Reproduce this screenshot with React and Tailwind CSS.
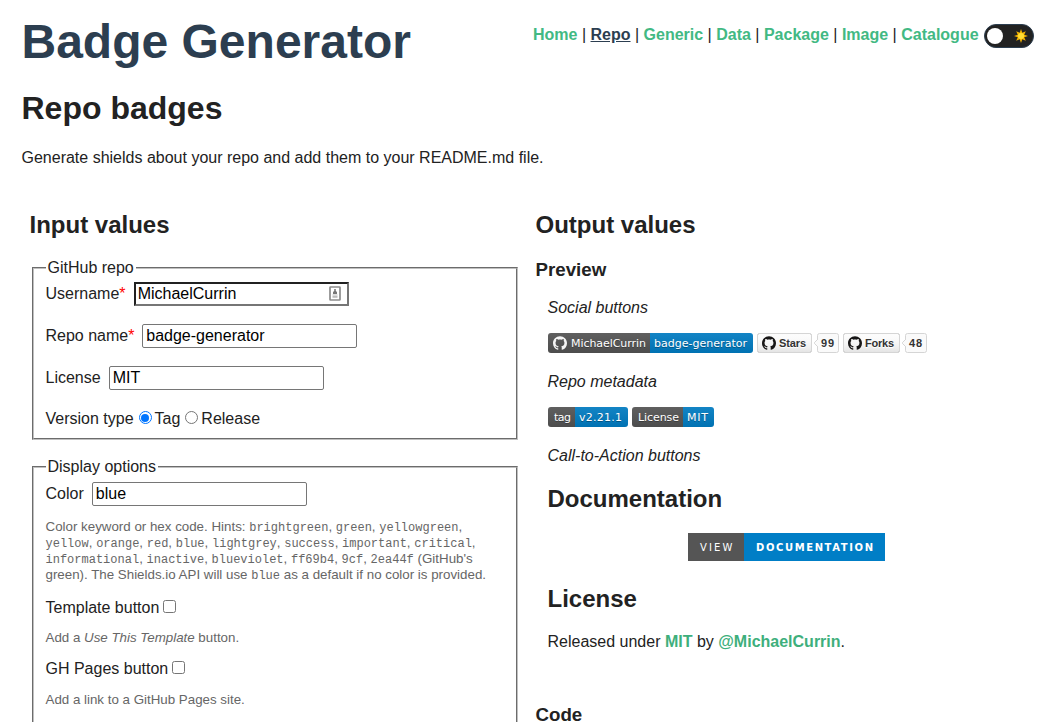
import React from "react";

const OCTOCAT =
  "M12 .297c-6.63 0-12 5.373-12 12 0 5.303 3.438 9.8 8.205 11.385.6.113.82-.258.82-.577 0-.285-.01-1.04-.015-2.04-3.338.724-4.042-1.61-4.042-1.61C4.422 18.07 3.633 17.7 3.633 17.7c-1.087-.744.084-.729.084-.729 1.205.084 1.838 1.236 1.838 1.236 1.07 1.835 2.809 1.305 3.495.998.108-.776.417-1.305.76-1.605-2.665-.3-5.466-1.332-5.466-5.93 0-1.31.465-2.38 1.235-3.22-.135-.303-.54-1.523.105-3.176 0 0 1.005-.322 3.3 1.23.96-.267 1.98-.399 3-.405 1.02.006 2.04.138 3 .405 2.28-1.552 3.285-1.23 3.285-1.23.645 1.653.24 2.873.12 3.176.765.84 1.23 1.91 1.23 3.22 0 4.61-2.805 5.625-5.475 5.92.42.36.81 1.096.81 2.22 0 1.606-.015 2.896-.015 3.286 0 .315.21.69.825.57C20.565 22.092 24 17.592 24 12.297c0-6.627-5.373-12-12-12";

function Octocat({ fill }) {
  return (
    <svg x="5" y="3" width="14" height="14" viewBox="0 0 24 24">
      <path fill={fill} d={OCTOCAT} />
    </svg>
  );
}

function FlatBadge({ id, left, right, leftWidth, width, leftX, leftLength, rightLength, logo }) {
  const rightX = leftWidth + 4;
  return (
    <svg width={width} height="20" className="block shrink-0">
      <linearGradient id={`${id}-shade`} x2="0" y2="100%">
        <stop offset="0" stopColor="#bbb" stopOpacity=".1" />
        <stop offset="1" stopOpacity=".1" />
      </linearGradient>
      <clipPath id={`${id}-clip`}>
        <rect width={width} height="20" rx="3" />
      </clipPath>
      <g clipPath={`url(#${id}-clip)`}>
        <rect width={leftWidth} height="20" fill="#555" />
        <rect x={leftWidth} width={width - leftWidth} height="20" fill="#007ec6" />
        <rect width={width} height="20" fill={`url(#${id}-shade)`} />
      </g>
      {logo && <Octocat fill="whitesmoke" />}
      <g fill="#fff" className="font-['DejaVu_Sans',sans-serif] text-[11px] [text-shadow:0_1px_0_rgba(1,1,1,0.3)]">
        <text x={leftX} y="14" textLength={leftLength}>{left}</text>
        <text x={rightX} y="14" textLength={rightLength}>{right}</text>
      </g>
    </svg>
  );
}

function SocialBadge({ id, label, count, width, labelWidth, labelLength }) {
  const bx = labelWidth + 5.5;
  return (
    <svg width={width} height="20" className="block shrink-0">
      <linearGradient id={`${id}-shade`} x2="0" y2="100%">
        <stop offset="0" stopColor="#fcfcfc" stopOpacity="0" />
        <stop offset="1" stopOpacity=".1" />
      </linearGradient>
      <g stroke="#d5d5d5">
        <rect x=".5" y=".5" width={labelWidth - 1} height="19" rx="2" fill="#fcfcfc" />
        <rect x={bx} y=".5" width={width - bx - 0.5} height="19" rx="2" fill="#fafafa" />
        <path d={`M${bx} 6.5 l-3 3v1 l3 3`} fill="#fafafa" />
        <path d={`M${bx} 7v6`} stroke="#fafafa" />
        <rect x=".5" y=".5" width={labelWidth - 1} height="19" rx="2" fill={`url(#${id}-shade)`} />
      </g>
      <Octocat fill="#181717" />
      <g fill="#333" className="font-['Liberation_Sans',sans-serif] text-[11px] font-bold [text-shadow:0_1px_0_#fff]">
        <text x="22" y="14" textLength={labelLength}>{label}</text>
        <text x={labelWidth + 9} y="14" textLength="13">{count}</text>
      </g>
    </svg>
  );
}

function DocumentationBadge() {
  return (
    <svg width="197" height="28" className="block">
      <rect width="56" height="28" fill="#555" />
      <rect x="56" width="141" height="28" fill="#007ec6" />
      <g fill="#fff" className="font-['DejaVu_Sans',sans-serif] text-[10px]">
        <text x="12" y="17.5" textLength="32.5">VIEW</text>
        <text x="68" y="17.5" textLength="117" className="font-bold">DOCUMENTATION</text>
      </g>
    </svg>
  );
}

const links = ["Home", "Repo", "Generic", "Data", "Package", "Image", "Catalogue"];

function Nav() {
  return (
    <nav className="flex pt-[14px] leading-[18px]">
      <div className="whitespace-pre pt-[2px] text-[#2c3e50]">
        {links.map((name, i) => (
          <React.Fragment key={name}>
            {i > 0 && <span className="text-[#222]"> | </span>}
            <a
              href="#"
              className={name === "Repo" ? "font-bold text-[#2c3e50] underline" : "font-bold text-[#42b983]"}
            >
              {name}
            </a>
          </React.Fragment>
        ))}
      </div>
      <button className="ml-[5.3px] flex h-6 w-[50px] items-center justify-between rounded-full border border-[#2c3e50] bg-[#222] pl-[2px] pr-[5px]">
        <span className="size-4 rounded-full bg-white" />
        <svg width="14" height="14" viewBox="-7 -7 14 14">
          <path
            fill="#f5b400"
            d="M0-7 1.3-3.2 4.8-4.8 3.2-1.3 7 0 3.2 1.3 4.8 4.8 1.3 3.2 0 7-1.3 3.2-4.8 4.8-3.2 1.3-7 0-3.2-1.3-4.8-4.8-1.3-3.2Z"
          />
          <circle r="3" fill="#ffdd33" />
        </svg>
      </button>
    </nav>
  );
}

function Fieldset({ legend, className, children }) {
  return (
    <fieldset className={`ml-[2px] w-[486px] border-2 border-[#c0c0c0] [border-style:groove] px-[12px] ${className}`}>
      <legend className="px-[2px] leading-[18px]">{legend}</legend>
      {children}
    </fieldset>
  );
}

function Field({ label, required, value, focused, gap = "mr-[8.1px]" }) {
  return (
    <div className="mb-[18px] flex h-6 items-center leading-[18px]">
      <label className={gap}>
        {label}
        {required && <span className="text-[#f00]">*</span>}
      </label>
      <div
        className={
          focused
            ? "flex h-6 w-[215px] items-center justify-between border-2 border-[#767676] bg-white pl-[2px] pr-[6px] text-black [border-style:inset]"
            : "flex h-6 w-[215px] items-center rounded-[2px] border border-[#767676] bg-white pl-[3px] text-black"
        }
      >
        <span>{value}</span>
        {focused && (
          <svg width="12" height="15" viewBox="0 0 12 15" className="mb-[1px]">
            <rect x="1" y="1" width="10" height="13" rx=".5" fill="#fff" stroke="#8c8c8c" strokeWidth="1.7" />
            <path d="M5.2 3h1.6v2L8 6v2H4V6l1.2-1Z" fill="#777" />
            <path d="M3.5 8h5v1.2h-5Z" fill="#ddd" />
            <path d="M3.5 9.5h5v2.3h-5Z" fill="#bbb" />
          </svg>
        )}
      </div>
    </div>
  );
}

function Radio({ checked }) {
  return (
    <span
      className={`mb-[3px] flex size-[13px] items-center justify-center rounded-full border bg-white ${checked ? "border-[#0075ff]" : "border-[#767676]"}`}
    >
      {checked && <span className="size-[8px] shrink-0 rounded-full bg-[#0075ff]" />}
    </span>
  );
}

function CheckRow({ label }) {
  return (
    <div className="flex h-[18px] items-center leading-[18px]">
      {label}
      <span className="ml-[4px] mb-[3px] size-[13px] rounded-[2.5px] border border-[#767676] bg-white" />
    </div>
  );
}

function Code({ children }) {
  return <code className="font-['Liberation_Mono',monospace] text-[12px] leading-none">{children}</code>;
}

const lines = [
  ["brightgreen", "green", "yellowgreen"],
  ["yellow", "orange", "red", "blue", "lightgrey", "success", "important", "critical"],
  ["informational", "inactive", "blueviolet", "ff69b4", "9cf"],
];

function Words({ words }) {
  return words.map((w, i) => (
    <React.Fragment key={w}>
      {i > 0 && " "}
      <Code>{w}</Code>,
    </React.Fragment>
  ));
}

export default function App() {
  return (
    <div className="h-[722px] overflow-hidden bg-white px-[21.5px] pt-[10px] font-['Liberation_Sans',Arial,sans-serif] text-[16px] text-[#222]">
      <header className="flex h-[80px] justify-between pr-[1.65px]">
        <h1 className="pt-[4px] text-[48px] font-bold leading-[56px] text-[#2c3e50]">Badge Generator</h1>
        <Nav />
      </header>
      <h2 className="text-[32px] font-bold leading-[36px]">Repo badges</h2>
      <p className="mt-[23px] leading-[18px]">Generate shields about your repo and add them to your README.md file.</p>

      <main className="mt-[44px] flex">
        <section className="w-[506px] shrink-0 pl-[8px]">
          <h2 className="text-[24px] font-bold leading-[28px]">Input values</h2>
          <Fieldset legend="GitHub repo" className="mt-[20px] h-[181px]">
            <div className="pt-[5px]">
              <Field label="Username" required value="MichaelCurrin" focused />
              <Field label="Repo name" required value="badge-generator" gap="mr-[7.8px]" />
              <Field label="License" value="MIT" />
            </div>
            <div className="flex h-[22px] items-center leading-[18px]">
              <span className="mr-[5px]">Version type</span>
              <Radio checked />
              <span className="ml-[3px] mr-[5px]">Tag</span>
              <Radio />
              <span className="ml-[3px]">Release</span>
            </div>
          </Fieldset>
          <Fieldset legend="Display options" className="mt-[18px] h-[320px]">
            <div className="pt-[6px]">
              <Field label="Color" value="blue" />
            </div>
            <p className="-mt-[5px] whitespace-nowrap text-[13.333px] leading-[16px] text-[#666]">
              Color keyword or hex code. Hints: <Words words={lines[0]} />
              <br />
              <Words words={lines[1]} />
              <br />
              <Words words={lines[2]} /> <Code>2ea44f</Code> (GitHub's
              <br />
              green). The Shields.io API will use <Code>blue</Code> as a default if no color is provided.
            </p>
            <div className="mt-[16px]">
              <CheckRow label="Template button" />
              <p className="mt-[13px] text-[13.333px] leading-[16px] text-[#666]">
                Add a <em>Use This Template</em> button.
              </p>
            </div>
            <div className="mt-[14px]">
              <CheckRow label="GH Pages button" />
              <p className="mt-[14px] text-[13.333px] leading-[16px] text-[#666]">Add a link to a GitHub Pages site.</p>
            </div>
          </Fieldset>
        </section>

        <section className="flex-1 pl-[8px]">
          <h2 className="text-[24px] font-bold leading-[28px]">Output values</h2>
          <h3 className="mt-[20px] text-[18.72px] font-bold leading-[22px]">Preview</h3>
          <div className="ml-[12px] w-[478px]">
            <p className="mt-[18px] italic leading-[18px]">Social buttons</p>
            <div className="mt-[16px] flex gap-[4px]">
              <FlatBadge id="repo" logo left="MichaelCurrin" right="badge-generator" leftWidth={102} width={205} leftX={23} leftLength={75} rightLength={93} />
              <SocialBadge id="stars" label="Stars" count="99" width={82} labelWidth={55} labelLength={27} />
              <SocialBadge id="forks" label="Forks" count="48" width={84} labelWidth={57} labelLength={29} />
            </div>
            <p className="mt-[20px] italic leading-[18px]">Repo metadata</p>
            <div className="mt-[16px] flex gap-[4px]">
              <FlatBadge id="tag" left="tag" right="v2.21.1" leftWidth={27} width={80} leftX={6} leftLength={17} rightLength={43} />
              <FlatBadge id="license" left="License" right="MIT" leftWidth={51} width={82} leftX={6} leftLength={41} rightLength={21} />
            </div>
            <p className="mt-[20px] italic leading-[18px]">Call-to-Action buttons</p>
            <h2 className="mt-[20px] text-[24px] font-bold leading-[28px]">Documentation</h2>
            <div className="mt-[20px] flex justify-center">
              <DocumentationBadge />
            </div>
            <h2 className="mt-[24px] text-[24px] font-bold leading-[28px]">License</h2>
            <p className="mt-[20px] leading-[18px]">
              Released under <a href="#" className="font-bold text-[#3eaf7c]">MIT</a> by{" "}
              <a href="#" className="font-bold text-[#3eaf7c]">@MichaelCurrin</a>.
            </p>
          </div>
          <h3 className="mt-[53px] text-[18.72px] font-bold leading-[22px]">Code</h3>
        </section>
      </main>
    </div>
  );
}
